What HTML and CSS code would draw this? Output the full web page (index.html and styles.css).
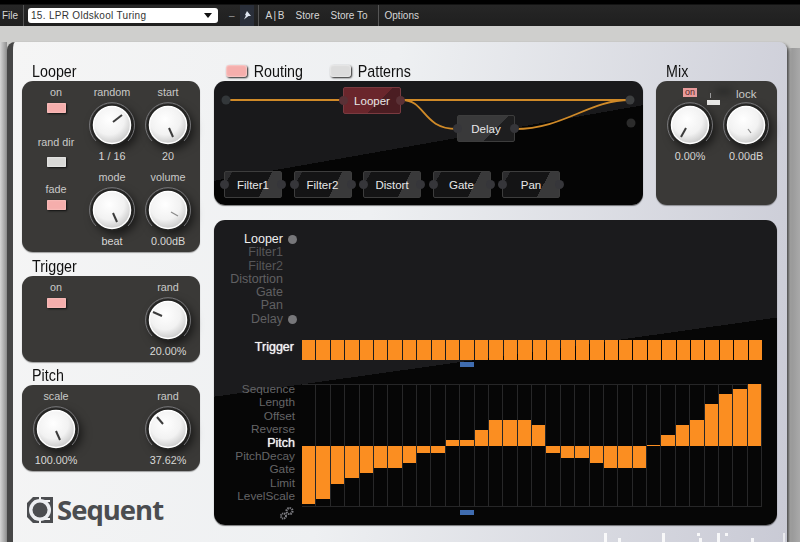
FILE: index.html
```html
<!DOCTYPE html>
<html lang="en">
<head>
    <meta charset="UTF-8">
    <meta name="viewport" content="width=device-width, initial-scale=1.0">
    <title>Sequent</title>
    <link rel="stylesheet" href="styles.css">
</head>
<body>
    <svg class="defs" width="0" height="0">
        <defs>
            <radialGradient id="capFill" cx="42%" cy="35%" r="75%">
                <stop offset="0" stop-color="#ffffff"/>
                <stop offset="0.55" stop-color="#f2f2f2"/>
                <stop offset="1" stop-color="#bdbdbd"/>
            </radialGradient>
            <symbol id="knobBase" viewBox="0 0 50 50">
                <path d="M9 41a22.500 22.500 0 1 1 32 0" fill="none" stroke="#77777a" stroke-width="1"/>
                <circle cx="25" cy="25" r="21" fill="#232322"/>
                <circle cx="25" cy="25" r="18.500" fill="url(#capFill)" stroke="#fff" stroke-width="1.500"/>
            </symbol>
        </defs>
    </svg>

    <!-- host toolbar -->
    <header class="toolbar">
        <span class="tool file">File</span>
        <div class="preset"><span>15. LPR Oldskool Turing</span><i class="caret"></i></div>
        <span class="tool minus">–</span>
        <span class="pin"><svg width="10" height="10" viewBox="0 0 10 10"><path d="M5 1 9 6H6.500L2 9.500 4 5.500 3 5z" fill="#dfe6f2"/></svg></span>
        <span class="tool ab">A | B</span>
        <span class="tool store">Store</span>
        <span class="tool storeto">Store To</span>
        <span class="tool options">Options</span>
    </header>

    <div class="stage">
        <main class="panel">
            <div class="left">
                <h2 class="title">Looper</h2>
                <section class="box looper">
                    <div class="cell">
                        <span class="lbl">on</span>
                        <i class="led on"></i>
                        <span class="lbl randdir">rand dir</span>
                        <i class="led"></i>
                        <span class="lbl fade">fade</span>
                        <i class="led on"></i>
                    </div>
                    <div class="cell">
                        <div class="knob"><span class="lbl">random</span>
                            <svg width="50" height="50"><use href="#knobBase"/><line x1="26" y1="22" x2="35" y2="15" class="mark"/></svg>
                            <span class="val">1 / 16</span></div>
                        <div class="knob"><span class="lbl">mode</span>
                            <svg width="50" height="50"><use href="#knobBase"/><line x1="26" y1="28" x2="30" y2="37" class="mark"/></svg>
                            <span class="val">beat</span></div>
                    </div>
                    <div class="cell">
                        <div class="knob"><span class="lbl">start</span>
                            <svg width="50" height="50"><use href="#knobBase"/><line x1="26" y1="28" x2="30" y2="37" class="mark"/></svg>
                            <span class="val">20</span></div>
                        <div class="knob"><span class="lbl">volume</span>
                            <svg width="50" height="50"><use href="#knobBase"/><line x1="28" y1="27" x2="35" y2="31" class="mark thin"/></svg>
                            <span class="val">0.00dB</span></div>
                    </div>
                </section>

                <h2 class="title">Trigger</h2>
                <section class="box small">
                    <div class="cell">
                        <span class="lbl">on</span>
                        <i class="led on"></i>
                    </div>
                    <div class="cell last">
                        <div class="knob"><span class="lbl">rand</span>
                            <svg width="50" height="50"><use href="#knobBase"/><line x1="19" y1="21" x2="10" y2="17" class="mark"/></svg>
                            <span class="val">20.00%</span></div>
                    </div>
                </section>

                <h2 class="title">Pitch</h2>
                <section class="box small">
                    <div class="cell">
                        <div class="knob"><span class="lbl">scale</span>
                            <svg width="50" height="50"><use href="#knobBase"/><line x1="25" y1="27" x2="29" y2="36" class="mark"/></svg>
                            <span class="val">100.00%</span></div>
                    </div>
                    <div class="cell last">
                        <div class="knob"><span class="lbl">rand</span>
                            <svg width="50" height="50"><use href="#knobBase"/><line x1="20" y1="20" x2="14" y2="13" class="mark"/></svg>
                            <span class="val">37.62%</span></div>
                    </div>
                </section>

                <div class="logo">
                    <svg width="28" height="28" viewBox="0 0 28 28">
                        <path d="M7 1h6v3H9L4 9v10l5 5h4v3H7L1 21V7zM15 1h12v26H15v-3h9V4h-9z" fill="#4b4d50"/>
                        <path d="M4 6h20v16H4z" fill="#4b4d50"/>
                        <circle cx="14" cy="14" r="11" fill="#eceef1"/>
                        <circle cx="14" cy="14" r="7.500" fill="#4b4d50"/>
                    </svg>
                    <span>Sequent</span>
                </div>
            </div>

            <div class="right">
                <div class="top-row">
                    <div class="routing-col">
                        <div class="tabs">
                            <i class="tab-led on"></i><span class="title tab">Routing</span>
                            <i class="tab-led"></i><span class="title tab">Patterns</span>
                        </div>
                        <section class="routing">
                            <svg class="wires" width="429" height="124" viewBox="0 0 429 124">
                                <g fill="none" stroke="#d08a28" stroke-width="1.800">
                                    <path d="M12 19H130"/>
                                    <path d="M188 19H416"/>
                                    <path d="M188 19C212 19 208 48 243 48"/>
                                    <path d="M301 48C350 48 375 19 416 19"/>
                                </g>
                                <circle cx="12" cy="19" r="4.500" fill="#33373a"/>
                                <circle cx="416" cy="19" r="4.500" fill="#3d3f40"/>
                                <circle cx="417" cy="42" r="4.500" fill="#2b2b2b"/>
                            </svg>
                            <div class="node active wired-looper"><i class="port in"></i>Looper<i class="port out"></i></div>
                            <div class="node wired-delay"><i class="port in"></i>Delay<i class="port out"></i></div>
                            <div class="slots">
                                <div class="node"><i class="port in"></i>Filter1<i class="port out"></i></div>
                                <div class="node"><i class="port in"></i>Filter2<i class="port out"></i></div>
                                <div class="node"><i class="port in"></i>Distort<i class="port out"></i></div>
                                <div class="node"><i class="port in"></i>Gate<i class="port out"></i></div>
                                <div class="node"><i class="port in"></i>Pan<i class="port out"></i></div>
                            </div>
                        </section>
                    </div>
                    <div class="mix-col">
                        <h2 class="title">Mix</h2>
                        <section class="box mix">
                            <div class="mix-top">
                                <span class="mini-on">on</span>
                                <i class="mini-btn"></i>
                                <span class="lbl">lock</span>
                            </div>
                            <div class="mix-knobs">
                                <div class="knob">
                                    <svg width="50" height="50"><use href="#knobBase"/><line x1="21" y1="28" x2="16" y2="37" class="mark"/></svg>
                                    <span class="val">0.00%</span></div>
                                <div class="knob">
                                    <svg width="50" height="50"><use href="#knobBase"/><line x1="27" y1="29" x2="30" y2="33" class="mark thin"/></svg>
                                    <span class="val">0.00dB</span></div>
                            </div>
                        </section>
                    </div>
                </div>

                <section class="seq">
                    <div class="slots-list">
                        <div class="row current">Looper<i class="dot"></i></div>
                        <div class="row s1">Filter1</div>
                        <div class="row s2">Filter2</div>
                        <div class="row s3">Distortion</div>
                        <div class="row s4">Gate</div>
                        <div class="row s5">Pan</div>
                        <div class="row s6">Delay<i class="dot"></i></div>
                    </div>

                    <div class="trigger-row">
                        <span class="trigger-name">Trigger</span>
                        <div class="trigger-bars">
                            <i></i><i></i><i></i><i></i><i></i><i></i><i></i><i></i>
                            <i></i><i></i><i></i><i></i><i></i><i></i><i></i><i></i>
                            <i></i><i></i><i></i><i></i><i></i><i></i><i></i><i></i>
                            <i></i><i></i><i></i><i></i><i></i><i></i><i></i><i></i>
                        </div>
                    </div>
                    <div class="pos"><i></i></div>

                    <div class="pitch-row">
                        <div class="params">
                            <div>Sequence</div>
                            <div>Length</div>
                            <div>Offset</div>
                            <div>Reverse</div>
                            <div class="current">Pitch</div>
                            <div>PitchDecay</div>
                            <div>Gate</div>
                            <div>Limit</div>
                            <div>LevelScale</div>
                        </div>
                        <div class="chart">
                            <div class="step down"><i style="height:58px"></i></div>
                            <div class="step down"><i style="height:53px"></i></div>
                            <div class="step down"><i style="height:38px"></i></div>
                            <div class="step down"><i style="height:32px"></i></div>
                            <div class="step down"><i style="height:27px"></i></div>
                            <div class="step down"><i style="height:22px"></i></div>
                            <div class="step down"><i style="height:22px"></i></div>
                            <div class="step down"><i style="height:17px"></i></div>
                            <div class="step down"><i style="height:7px"></i></div>
                            <div class="step down"><i style="height:7px"></i></div>
                            <div class="step up"><i style="height:6px"></i></div>
                            <div class="step up"><i style="height:6px"></i></div>
                            <div class="step up"><i style="height:16px"></i></div>
                            <div class="step up"><i style="height:26px"></i></div>
                            <div class="step up"><i style="height:26px"></i></div>
                            <div class="step up"><i style="height:26px"></i></div>
                            <div class="step up"><i style="height:21px"></i></div>
                            <div class="step down"><i style="height:7px"></i></div>
                            <div class="step down"><i style="height:12px"></i></div>
                            <div class="step down"><i style="height:12px"></i></div>
                            <div class="step down"><i style="height:17px"></i></div>
                            <div class="step down"><i style="height:22px"></i></div>
                            <div class="step down"><i style="height:22px"></i></div>
                            <div class="step down"><i style="height:22px"></i></div>
                            <div class="step up"><i style="height:1px"></i></div>
                            <div class="step up"><i style="height:11px"></i></div>
                            <div class="step up"><i style="height:21px"></i></div>
                            <div class="step up"><i style="height:26px"></i></div>
                            <div class="step up"><i style="height:42px"></i></div>
                            <div class="step up"><i style="height:52px"></i></div>
                            <div class="step up"><i style="height:57px"></i></div>
                            <div class="step up"><i style="height:62px"></i></div>
                        </div>
                    </div>
                    <div class="pos-row">
                        <svg class="gears" width="16" height="14" viewBox="0 0 16 14">
                            <circle cx="10.500" cy="5" r="3" fill="none" stroke="#7b7b80" stroke-width="2.200" stroke-dasharray="1.500 0.800"/>
                            <circle cx="4.500" cy="10" r="2.500" fill="none" stroke="#7b7b80" stroke-width="2" stroke-dasharray="1.300 0.700"/>
                        </svg>
                        <div class="pos"><i></i></div>
                    </div>
                </section>

                <!-- tops of the cut off lettering under the panel -->
                <svg class="cutoff" width="573" height="17" viewBox="0 0 573 17">
                    <g fill="#fff" opacity="0.85">
                        <rect x="390" y="8" width="3" height="9"/>
                        <rect x="404" y="13" width="3" height="4"/>
                        <rect x="448" y="8" width="3" height="9"/>
                        <rect x="483" y="8" width="3" height="3"/>
                        <rect x="485" y="13" width="3" height="4"/>
                        <rect x="503" y="8" width="3" height="9"/>
                        <rect x="511" y="8" width="3" height="3"/>
                        <rect x="537" y="13" width="3" height="4"/>
                        <rect x="569" y="8" width="2" height="9" opacity="0.7"/>
                    </g>
                </svg>
            </div>
        </main>
    </div>
</body>
</html>
```
FILE: styles.css
```css
* {
    box-sizing: border-box;
}

body, html {
    margin: 0;
    padding: 0;
    height: 100%;
    overflow: hidden;
    font-family: 'Liberation Sans', Arial, sans-serif;
}

body {
    display: flex;
    flex-direction: column;
    background-color: #cfcfcd;
}

.defs {
    position: absolute;
}

/* toolbar */
.toolbar {
    height: 26px;
    flex: none;
    display: flex;
    align-items: center;
    background: linear-gradient(to bottom, #000 0, #000 4px, #262626 5px, #1f1f1f 100%);
    padding-top: 4px;
    color: #d6d6d6;
    font-size: 10px;
}

.tool {
    white-space: nowrap;
}

.file {
    width: 24px;
    padding-left: 2px;
    height: 21px;
    line-height: 21px;
    border-right: 1px solid #555;
}

.preset {
    width: 190px;
    height: 15px;
    margin-left: 4px;
    background-color: #fff;
    border-radius: 3px;
    color: #333;
    display: flex;
    align-items: center;
    justify-content: space-between;
    padding: 0 6px 0 3px;
    font-size: 10px;
    letter-spacing: 0.3px;
}

.caret {
    width: 0;
    height: 0;
    border-left: 4px solid transparent;
    border-right: 4px solid transparent;
    border-top: 5px solid #111;
}

.minus {
    margin-left: 11px;
    color: #999;
}

.pin {
    width: 14px;
    height: 21px;
    margin-left: 5px;
    background-color: #2a2f3a;
    display: flex;
    align-items: center;
    justify-content: center;
}

.ab {
    margin-left: 4px;
    width: 31px;
    height: 21px;
    line-height: 21px;
    padding-left: 7px;
    word-spacing: -1px;
    border-left: 1px solid #555;
}

.store {
    margin-left: 7px;
}

.storeto {
    margin-left: 11px;
}

.options {
    margin-left: 10px;
    height: 21px;
    line-height: 21px;
    padding-left: 6px;
    border-left: 1px solid #555;
}

/* silver panel */
.stage {
    flex: 1;
    padding: 16px 13px 0 7px;
    min-height: 0;
    background:
        linear-gradient(to right, #d6d6d6 0, #8e8e8e 7px, transparent 7px) 0 16px no-repeat,
        linear-gradient(to right, transparent 787px, #9a9a9a 792px, #a9a9a9 100%) 0 22px no-repeat,
        #cfcfcd;
}

.panel {
    height: 500px;
    display: flex;
    gap: 14px;
    padding: 19px 10px 0 9px;
    border-left: 6px solid #474747;
    border-top-left-radius: 8px;
    border-top-right-radius: 8px;
    box-shadow: 2px 2px 3px #4a4a4a;
    background: linear-gradient(100deg, #f5f5f5 0, #eef0f2 45%, #c9cad5 100%);
}

.left {
    width: 178px;
    flex: none;
}

.title {
    margin: 0;
    padding-left: 12px;
    height: 20px;
    line-height: 22px;
    font-family: 'Liberation Sans', sans-serif;
    font-size: 17px;
    font-weight: normal;
    color: #111;
    transform: scaleX(0.84);
    transform-origin: 0 50%;
}

.box {
    background-color: #3a3937;
    border-radius: 11px;
    box-shadow: 0 1px 1px rgba(0, 0, 0, 0.35);
    display: grid;
    grid-template-columns: repeat(3, 56px);
    padding: 5px 4px 0 6px;
}

.looper {
    height: 171px;
    margin-bottom: 4px;
}

.small {
    height: 86px;
    margin-bottom: 3px;
}

.cell {
    display: flex;
    flex-direction: column;
    align-items: center;
}

.cell.last {
    grid-column: 3;
}

.lbl, .val {
    display: block;
    height: 12px;
    line-height: 12px;
    font-size: 10.8px;
    color: #c9c9c7;
    white-space: nowrap;
    text-align: center;
}

.val {
    color: #dcdcda;
}

.knob {
    display: flex;
    flex-direction: column;
    align-items: center;
    height: 85px;
}

.knob svg {
    display: block;
    margin-top: 2px;
    overflow: visible;
    filter: drop-shadow(4px 4px 4px rgba(0, 0, 0, 0.55));
}

.mark {
    stroke: #3c3c3c;
    stroke-width: 2;
}

.mark.thin {
    stroke: #8a8a8a;
    stroke-width: 1.2;
}

.led {
    display: block;
    width: 19px;
    height: 10px;
    margin-top: 5px;
    border-radius: 1px;
    background-color: #d8d8d6;
    box-shadow: 1px 1px 2px #111, inset 0 0 2px #fff;
}

.led.on {
    background-color: #f5aeac;
    box-shadow: 1px 1px 2px #111, inset 0 0 2px #ffd5d0;
}

.lbl.randdir {
    margin-top: 23px;
}

.randdir + .led {
    margin-top: 9px;
}

.lbl.fade {
    margin-top: 16px;
}

/* logo */
.logo {
    display: flex;
    align-items: center;
    gap: 3px;
    margin-top: 24px;
    padding-left: 4px;
}

.logo span {
    font-family: 'Open Sans', 'Liberation Sans', sans-serif;
    font-size: 27.5px;
    font-weight: 700;
    letter-spacing: -1px;
    color: #4b4d50;
    line-height: 30px;
}

/* right side */
.right {
    width: 563px;
    flex: none;
}

.top-row {
    display: flex;
    gap: 13px;
    height: 144px;
    margin-bottom: 15px;
}

.routing-col {
    width: 429px;
    flex: none;
}

.mix-col {
    width: 121px;
    flex: none;
}

.tabs {
    height: 20px;
    display: flex;
    align-items: center;
    padding-left: 12px;
}

.tab {
    padding-left: 8px;
    width: 83px;
    flex: none;
}

.tab-led {
    width: 21px;
    height: 12px;
    flex: none;
    border-radius: 3px;
    background-color: #dcdcdc;
    box-shadow: 1px 1px 2px #222, inset 0 0 2px #fff;
}

.tab-led.on {
    background-color: #f5aeac;
}

.routing {
    position: relative;
    height: 124px;
    border-radius: 11px;
    background: linear-gradient(170deg, #19191b 50%, #050505 50%);
    box-shadow: 0 1px 1px rgba(0, 0, 0, 0.5);
    padding-top: 90px;
}

.wires {
    position: absolute;
    left: 0;
    top: 0;
}

.node {
    width: 58px;
    height: 27px;
    position: relative;
    flex: none;
    display: flex;
    align-items: center;
    justify-content: center;
    border-radius: 2px;
    border: 1px solid #3d3d3d;
    background: linear-gradient(118deg, #2c2c2e 10%, #141415 10%, #141415 68%, #39393a 68%);
    color: #e8e8e8;
    font-size: 11.5px;
}

.node.active {
    border-color: #7a3a40;
    background: linear-gradient(135deg, #6a262c 60%, #4b1d22 60%);
}

.wired-looper {
    position: absolute;
    left: 129px;
    top: 6px;
}

.wired-delay {
    position: absolute;
    left: 243px;
    top: 34px;
    background: linear-gradient(135deg, #39393a 62%, #1e1e1f 62%);
}

.port {
    position: absolute;
    top: 8px;
    width: 9px;
    height: 9px;
    border-radius: 50%;
    background-color: #36363a;
}

.port.in {
    left: -5px;
}

.port.out {
    right: -5px;
}

.active .port {
    background-color: #5a3136;
}

.slots {
    display: flex;
    gap: 11.5px;
    padding-left: 10px;
}

.mix {
    display: block;
    height: 124px;
    padding: 7px 0 0;
}

.mix-top {
    height: 10px;
    display: flex;
    align-items: flex-start;
    padding-left: 27px;
}

.mini-on {
    width: 14px;
    height: 9px;
    line-height: 9px;
    text-align: center;
    font-size: 9px;
    color: #58282a;
    background-color: #e99b9b;
}

.mini-btn {
    position: relative;
    width: 13px;
    height: 5px;
    margin: 12px 0 0 10px;
    background-color: #e8e8e6;
    box-shadow: 10px -11px 6px 1px #2d2d2c;
}

.mini-btn::before {
    content: "";
    position: absolute;
    left: 3px;
    top: -7px;
    width: 1px;
    height: 5px;
    background-color: #999;
}

.mix-top .lbl {
    margin: 0 0 0 16px;
    font-size: 11.5px;
    position: relative;
}

.mix-knobs {
    display: flex;
    padding-left: 6px;
}

.mix-knobs .knob {
    width: 56px;
}

/* sequencer */
.seq {
    height: 305px;
    border-radius: 11px;
    background: linear-gradient(172deg, #1b1b1d 46%, #060606 46%);
    box-shadow: 0 1px 1px rgba(0, 0, 0, 0.5);
    padding-top: 13px;
}

.slots-list {
    height: 107px;
    display: flex;
    flex-direction: column;
    font-size: 12.5px;
}

.row {
    width: 69px;
    height: 13.25px;
    line-height: 13.25px;
    text-align: right;
    color: #606062;
    position: relative;
    flex: none;
}

.row.s1, .row.s2 {
    color: #565658;
}

.row.current {
    color: #f0f0f0;
}

.dot {
    position: absolute;
    left: 74px;
    top: 2px;
    width: 9px;
    height: 9px;
    border-radius: 50%;
    background-color: #77777a;
}

.trigger-row {
    display: flex;
    align-items: flex-start;
    height: 20px;
}

.trigger-name {
    width: 80px;
    line-height: 14px;
    text-align: right;
    color: #f2f2f2;
    font-size: 12.5px;
    text-shadow: 0 0 1px #fff;
}

.trigger-bars {
    margin-left: 8px;
    width: 460px;
    height: 20px;
    display: flex;
    gap: 1px;
}

.trigger-bars i {
    flex: 1;
    background-color: #fb8e21;
}

.pos {
    margin-left: 88px;
    width: 460px;
    height: 6px;
    margin-top: 2px;
    display: flex;
    padding-left: 158px;
}

.pos i {
    width: 14px;
    height: 5px;
    background-color: #3f6cb0;
}

.pitch-row {
    display: flex;
    height: 123px;
    margin-top: 16px;
}

.params {
    width: 81px;
    flex: none;
    margin-top: -1px;
    text-align: right;
    color: #656567;
    font-size: 11.8px;
}

.params div {
    height: 13.4px;
    line-height: 13.4px;
    white-space: nowrap;
}

.params .current {
    color: #f1f1f1;
    font-size: 12.5px;
    text-shadow: 0 0 1px #fff;
}

.chart {
    margin-left: 7px;
    width: 460px;
    height: 123px;
    display: flex;
    border-top: 1px solid #262627;
    border-bottom: 1px solid #262627;
}

.step {
    flex: 1;
    display: flex;
    flex-direction: column;
    border-right: 1px solid #272728;
}

.step i {
    display: block;
    background-color: #fb8e21;
    flex: none;
}

.step.up {
    justify-content: flex-end;
    padding-bottom: 60px;
}

.step.down {
    padding-top: 61px;
}

.pos-row {
    display: flex;
    align-items: center;
    height: 12px;
}

.gears {
    margin-left: 65px;
    flex: none;
}

.pos-row .pos {
    margin-left: 7px;
    margin-top: 0;
}

.cutoff {
    display: block;
}
```
